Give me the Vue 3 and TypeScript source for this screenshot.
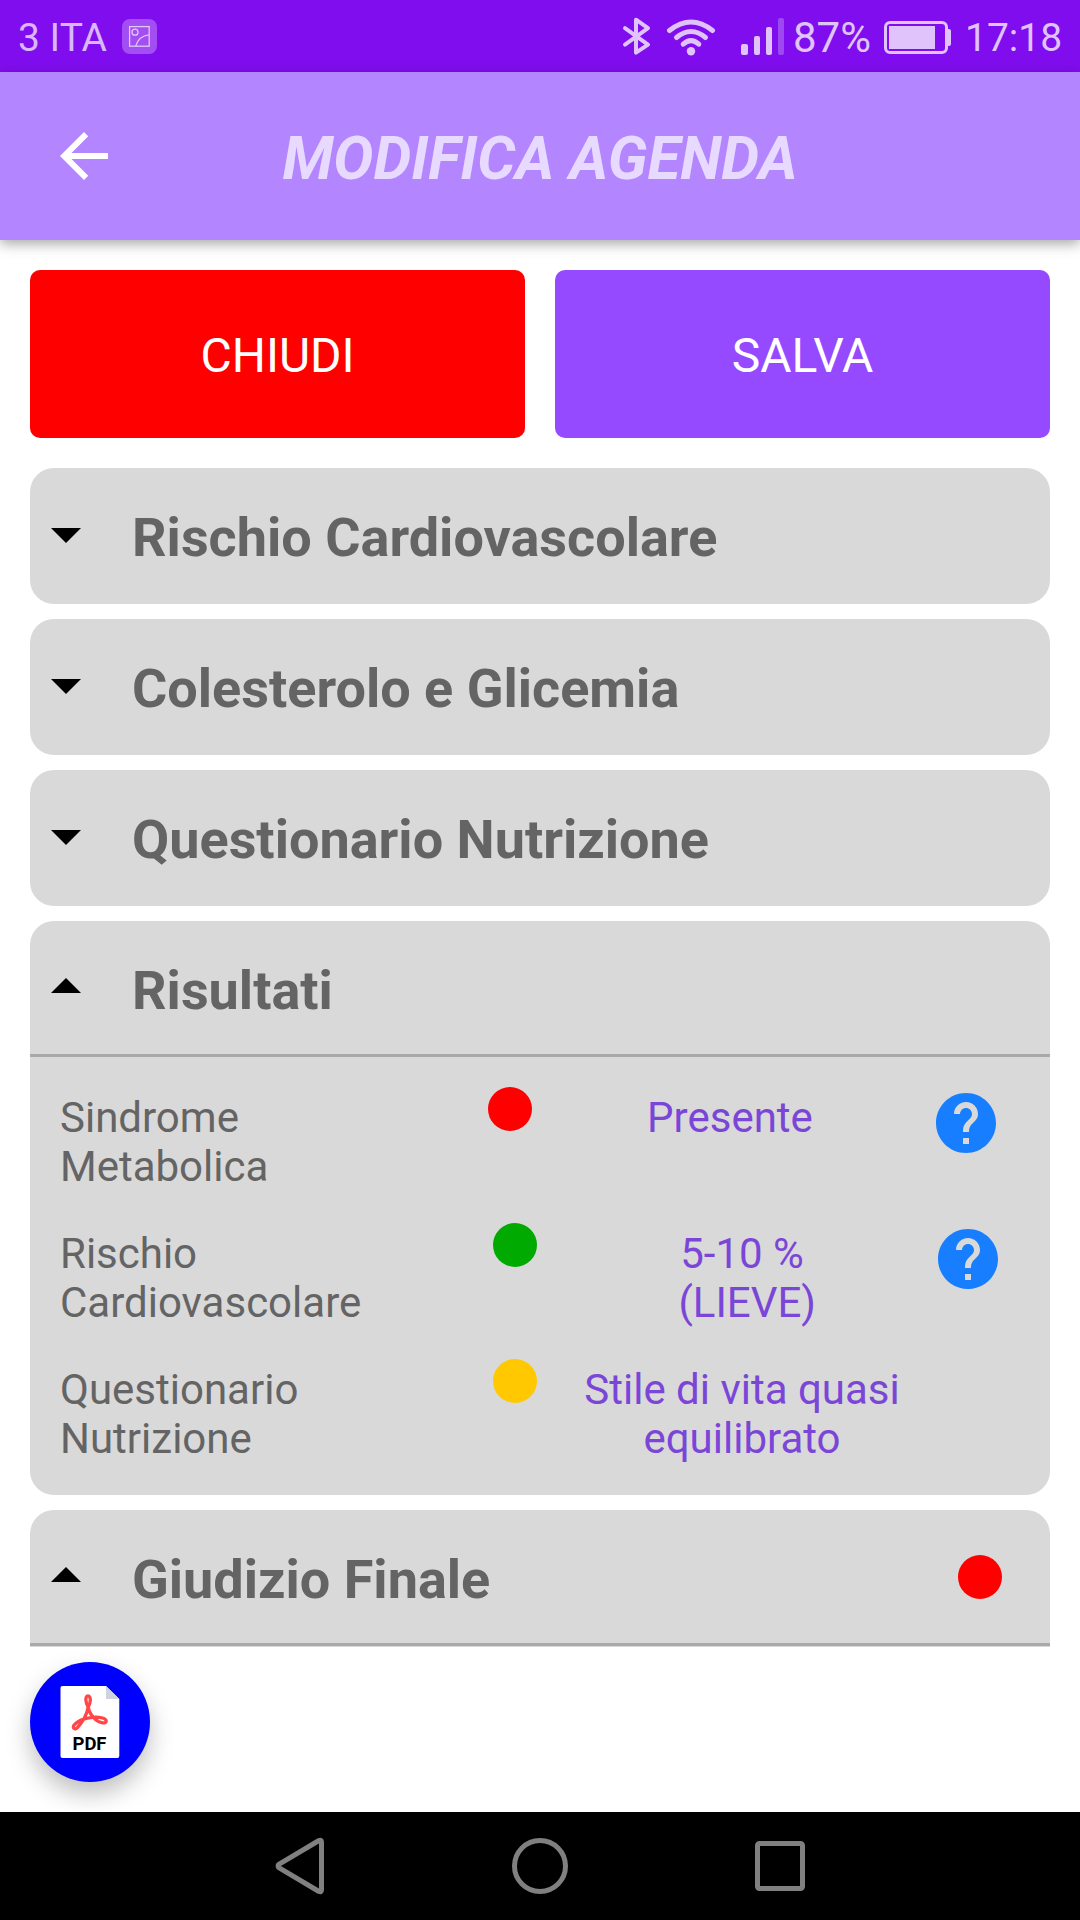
<script setup lang="ts">
interface Result {
  label: string[]
  color: string
  value: string[]
  help: boolean
  compact: boolean
}

const closedSections: string[] = [
  'Rischio Cardiovascolare',
  'Colesterolo e Glicemia',
  'Questionario Nutrizione',
]

const results: Result[] = [
  { label: ['Sindrome', 'Metabolica'], color: '#ff0000', value: ['Presente'], help: true, compact: true },
  { label: ['Rischio', 'Cardiovascolare'], color: '#00aa00', value: ['5-10 %', '\u00a0(LIEVE)'], help: true, compact: false },
  { label: ['Questionario', 'Nutrizione'], color: '#ffc800', value: ['Stile di vita quasi', 'equilibrato'], help: false, compact: false },
]
</script>

<template>
  <div class="screen">
    <div class="status">
      <span class="carrier">3 ITA</span>
      <svg class="picture" width="35" height="35" viewBox="0 0 35 35" fill="none">
        <rect width="35" height="35" rx="8" fill="#fff" fill-opacity=".27" />
        <g stroke="#e2c6fb" stroke-width="1.3">
          <rect x="7.6" y="7.6" width="19.6" height="19.6" />
          <circle cx="13" cy="13.2" r="3" />
          <path d="M13.8 27C15.5 21 20 16.500 27 15.800" />
        </g>
      </svg>
      <span class="spacer"></span>
      <svg class="indicators" width="165" height="40" viewBox="0 0 165 40" fill="none">
        <path d="M5 12 28 28.500 16 36.500V3.500L28 12 5 28.500" transform="translate(-2 -.8)" stroke="#dfc3fa" stroke-width="4" stroke-linejoin="round" stroke-linecap="round" />
        <g stroke="#dfc3fa" stroke-width="5" stroke-linecap="round">
          <path d="M47.500 13.500Q69 -3.500 90.500 13.500" />
          <path d="M54.500 20.500Q69 8.500 83.500 20.500" />
          <path d="M61.200 27.200Q69 20 76.800 27.200" />
        </g>
        <circle cx="69" cy="34.300" r="4.200" fill="#dfc3fa" />
        <g fill="#dfc3fa">
          <rect x="119" y="27" width="7" height="11" rx="2" />
          <rect x="132" y="19" width="6" height="19" rx="2" />
          <rect x="144" y="10" width="6" height="28" rx="2" />
          <rect x="156" y="1" width="6" height="37" rx="2" fill="#9d48f0" />
        </g>
      </svg>
      <span class="percent">87%</span>
      <svg class="battery" width="68" height="34" viewBox="0 0 68 34">
        <rect x="1.500" y="1.500" width="61" height="30" rx="4.500" fill="none" stroke="#dfc3fa" stroke-width="3" />
        <path d="M5 5h46v23H5zM63 8h2q2 0 2 2v13q0 2-2 2h-2z" fill="#dfc3fa" />
      </svg>
      <span class="clock">17:18</span>
    </div>

    <header class="appbar">
      <svg class="back" width="72" height="72" viewBox="0 0 24 24" fill="#fff">
        <path d="M20 11H7.830l5.590-5.590L12 4l-8 8 8 8 1.410-1.410L7.830 13H20z" />
      </svg>
      <h1>MODIFICA AGENDA</h1>
    </header>

    <main class="content">
      <div class="actions">
        <button class="close">CHIUDI</button>
        <button class="save">SALVA</button>
      </div>

      <section v-for="title in closedSections" :key="title" class="card">
        <div class="heading">
          <svg class="caret" width="30" height="15" viewBox="0 0 30 15"><path d="M0 0h30L15 15z" /></svg>
          <h2>{{ title }}</h2>
        </div>
      </section>

      <section class="card results">
        <div class="heading open">
          <svg class="caret" width="30" height="15" viewBox="0 0 30 15"><path d="M0 15h30L15 0z" /></svg>
          <h2>Risultati</h2>
        </div>
        <div v-for="row in results" :key="row.label[0]" class="row" :class="{ compact: row.compact }">
          <div class="label"><div v-for="line in row.label" :key="line">{{ line }}</div></div>
          <span class="dot" :style="{ background: row.color }"></span>
          <div class="value"><div v-for="line in row.value" :key="line">{{ line }}</div></div>
          <svg v-if="row.help" class="help" width="60" height="60" viewBox="2 2 20 20" fill="#177fff">
            <path d="M12 2C6.480 2 2 6.480 2 12s4.480 10 10 10 10-4.480 10-10S17.520 2 12 2zm1 17h-2v-2h2v2zm2.070-7.750l-.9.920C13.450 12.900 13 13.500 13 15h-2v-.5c0-1.100.45-2.100 1.170-2.830l1.240-1.260c.37-.36.59-.86.59-1.410 0-1.100-.9-2-2-2s-2 .9-2 2H8c0-2.210 1.790-4 4-4s4 1.790 4 4c0 .88-.36 1.680-.93 2.250z" />
          </svg>
        </div>
      </section>

      <section class="card final">
        <div class="heading open">
          <svg class="caret" width="30" height="15" viewBox="0 0 30 15"><path d="M0 15h30L15 0z" /></svg>
          <h2>Giudizio Finale</h2>
          <span class="dot verdict"></span>
        </div>
      </section>

      <button class="fab" aria-label="PDF">
        <svg width="60" height="72" viewBox="0 0 60 72">
          <path d="M2.500 0h43.500l13.300 13V70q0 2-2 2H2.500q-2 0-2-2V2q0-2 2-2z" fill="#fff" />
          <path d="M46 0v13h13.300z" fill="#cfd3df" />
          <path d="M28.200 21C25.500 17 24.700 10 28 10S30.800 17 28.200 21C27.300 28 22 37 17.500 41.500C15 44.500 12 42 14.300 38.800C17 35.500 24 32.300 32 31.300C39 30.600 46.200 32 46.200 35C46.200 38.300 39.500 37 35.500 33.500C31.500 30 29 25.500 28.200 21Z" fill="none" stroke="#ff4747" stroke-width="3.300" stroke-linejoin="round" />
          <text x="12.500" y="63.700" font-size="18.500" font-weight="700" textLength="34">PDF</text>
        </svg>
      </button>
    </main>

    <nav class="navbar">
      <svg width="530" height="58" viewBox="0 0 530 58" fill="none" stroke="#808080" stroke-width="5" stroke-linejoin="round">
        <path d="M3.800 27.300Q2.500 29 3.800 30.700L44 54.500Q46.500 55.500 46.500 53V5Q46.500 2.500 44 3.500Z" />
        <circle cx="265" cy="29" r="25.500" />
        <rect x="482.500" y="6.500" width="45" height="45" rx="2" />
      </svg>
    </nav>
  </div>
</template>

<style>
body {
  margin: 0;
  background: #fff;
}
</style>

<style scoped>
.screen {
  width: 1080px;
  height: 1920px;
  display: flex;
  flex-direction: column;
  overflow: hidden;
  background: #fff;
  font-family: Roboto, 'Liberation Sans', sans-serif;
}
.status {
  height: 72px;
  flex: none;
  display: flex;
  align-items: flex-start;
  background: #800ded;
  color: #d9b7fa;
  line-height: 46px;
}
.carrier {
  margin: 15px 0 0 18px;
  width: 104px;
  font-size: 39px;
}
.picture {
  margin-top: 19px;
}
.spacer {
  flex: 1;
}
.indicators {
  margin-top: 17px;
}
.percent {
  width: 97px;
  margin-top: 15px;
  font-size: 42px;
  color: #dfc3fa;
  text-indent: 6px;
}
.battery {
  margin-top: 21px;
}
.clock {
  width: 115px;
  margin: 15px 0 0 13px;
  font-size: 39px;
  color: #dfc3fa;
}
.appbar {
  position: relative;
  z-index: 1;
  height: 168px;
  flex: none;
  display: grid;
  grid-template-columns: 120px 1fr 120px;
  align-items: center;
  background: #b385ff;
  box-shadow: 0 4px 12px rgba(0, 0, 0, 0.34);
}
.back {
  margin-left: 48px;
}
h1 {
  margin: 5px 0 0;
  font-size: 60px;
  line-height: 72px;
  font-style: italic;
  font-weight: 700;
  text-align: center;
  white-space: nowrap;
  color: #e8daff;
}
.content {
  flex: 1;
  padding: 30px 30px 0;
}
.actions {
  display: grid;
  grid-template-columns: 1fr 1fr;
  gap: 30px;
  margin-bottom: 30px;
}
button {
  border: 0;
  padding: 0;
  font-family: inherit;
}
.close,
.save {
  height: 168px;
  padding-top: 2px;
  border-radius: 10px;
  color: #fff;
  font-size: 48px;
}
.close {
  background: #f00;
}
.save {
  background: #964aff;
}
.card {
  margin-bottom: 15px;
  border-radius: 24px;
  background: #d9d9d9;
  color: #646464;
}
.heading {
  display: flex;
  height: 136px;
  box-sizing: border-box;
}
.heading.open {
  border-bottom: 3px solid #a9a9a9;
}
.caret {
  margin: 60px 0 0 21px;
}
.open .caret {
  margin-top: 57px;
}
h2 {
  margin: 38px 0 0 51px;
  font-size: 54px;
  line-height: 64px;
  font-weight: 700;
}
.results {
  height: 574px;
}
.row {
  display: flex;
  align-items: flex-start;
  height: 136px;
  padding-left: 30px;
  font-size: 42px;
  line-height: 49px;
}
.results .heading {
  margin-bottom: 30px;
}
.label {
  width: 433px;
  padding-top: 6px;
}
.dot {
  width: 44px;
  height: 44px;
  border-radius: 50%;
}
.value {
  width: 320px;
  margin-left: 45px;
  padding-top: 6px;
  text-align: center;
  color: #7b46d8;
}
.help {
  margin: 6px 0 0 36px;
}
.compact .label {
  width: 428px;
}
.compact .value {
  margin-left: 38px;
}
.compact .help {
  margin-left: 46px;
}
.final {
  height: 137px;
  border-radius: 24px 24px 0 0;
}
.verdict {
  margin: 45px 48px 0 auto;
  background: #f00;
}
.fab {
  display: flex;
  width: 120px;
  height: 120px;
  padding: 24px 30px;
  border-radius: 50%;
  background: #00f;
  box-shadow: 0 12px 24px rgba(0, 0, 0, 0.25);
}
.navbar {
  height: 108px;
  flex: none;
  position: relative;
  display: flex;
  justify-content: center;
  padding-top: 25px;
  box-sizing: border-box;
  background: #000;
}
</style>
